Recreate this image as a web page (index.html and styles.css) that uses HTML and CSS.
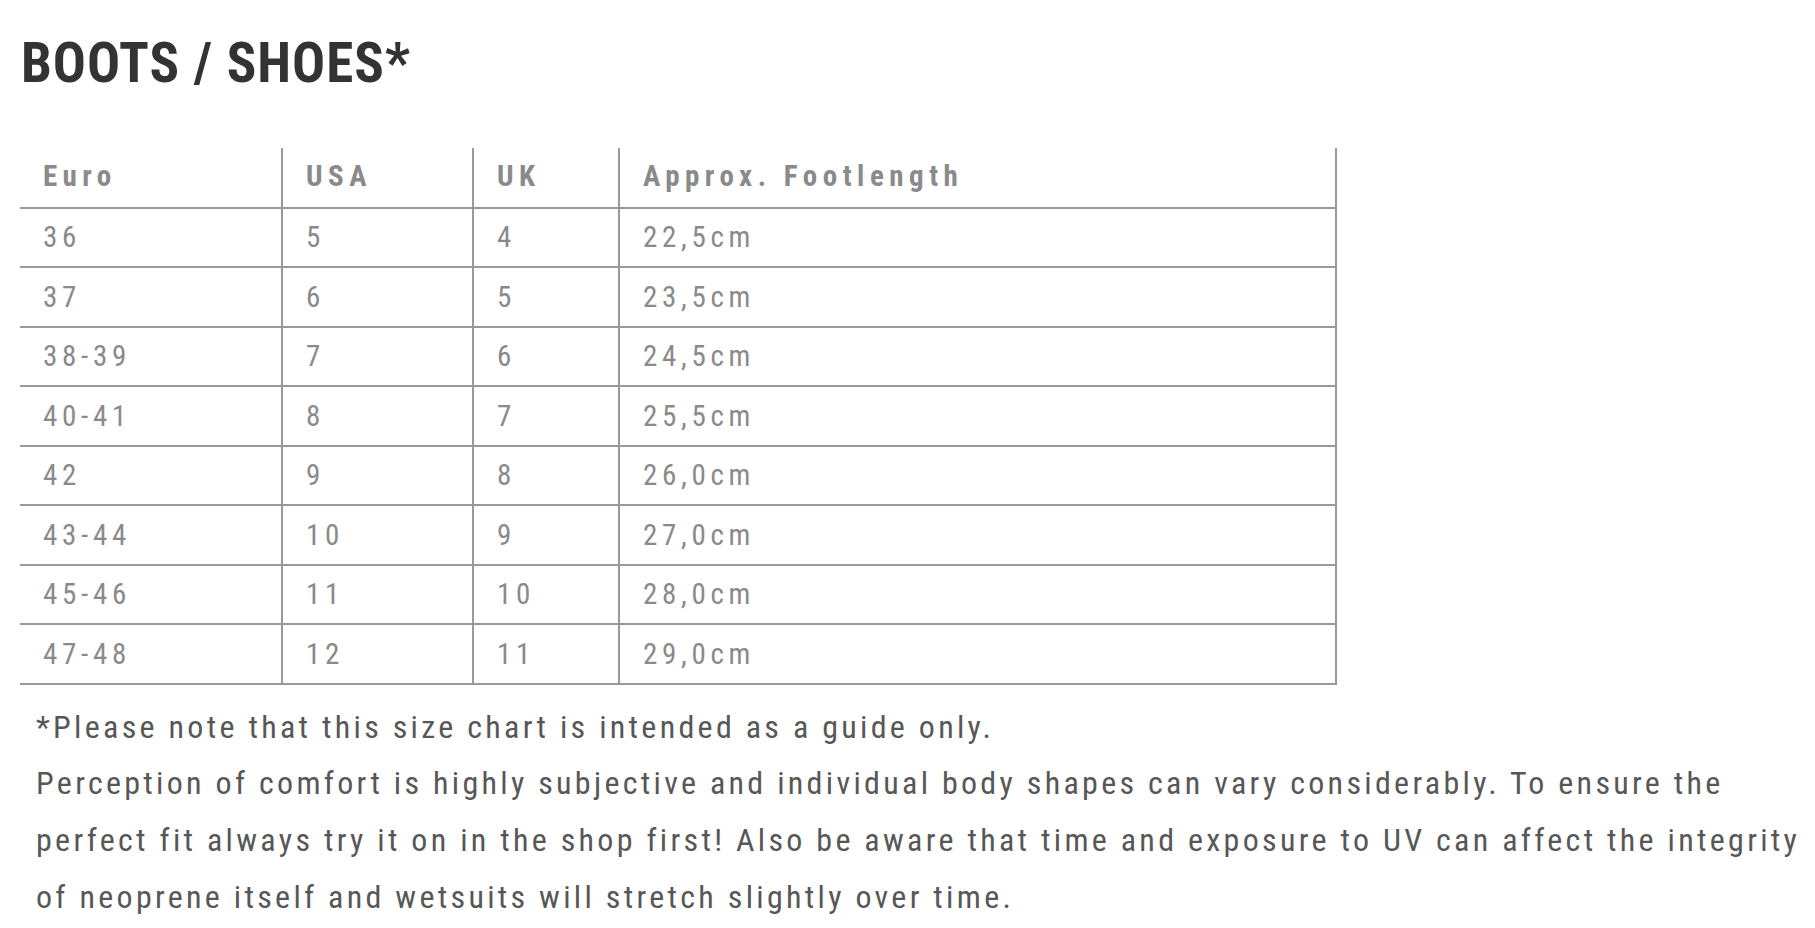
FILE: index.html
```html
<!DOCTYPE html>
<html lang="en">
<head>
<meta charset="utf-8">
<title>Boots / Shoes size chart</title>
<link rel="stylesheet" href="styles.css">
</head>
<body>
<main class="page">
  <h1 class="title">BOOTS / SHOES*</h1>
  <table class="chart">
    <thead>
      <tr><th class="c1">Euro</th><th class="c2">USA</th><th class="c3">UK</th><th class="c4">Approx. Footlength</th></tr>
    </thead>
    <tbody>
      <tr><td>36</td><td>5</td><td>4</td><td>22,5cm</td></tr>
      <tr><td>37</td><td>6</td><td>5</td><td>23,5cm</td></tr>
      <tr><td>38-39</td><td>7</td><td>6</td><td>24,5cm</td></tr>
      <tr><td>40-41</td><td>8</td><td>7</td><td>25,5cm</td></tr>
      <tr><td>42</td><td>9</td><td>8</td><td>26,0cm</td></tr>
      <tr><td>43-44</td><td>10</td><td>9</td><td>27,0cm</td></tr>
      <tr><td>45-46</td><td>11</td><td>10</td><td>28,0cm</td></tr>
      <tr><td>47-48</td><td>12</td><td>11</td><td>29,0cm</td></tr>
    </tbody>
  </table>
  <div class="notes">
    <p>*Please note that this size chart is intended as a guide only.</p>
    <p>Perception of comfort is highly subjective and individual body shapes can vary considerably. To ensure the<br>perfect fit always try it on in the shop first! Also be aware that time and exposure to UV can affect the integrity<br>of neoprene itself and wetsuits will stretch slightly over time.</p>
  </div>
</main>
</body>
</html>
```
FILE: styles.css
```css
html, body {
  margin: 0;
  padding: 0;
  background: #ffffff;
}

.page {
  display: flex;
  flex-direction: column;
  align-items: flex-start;
  padding: 33px 0 0 20px;
  font-family: "Liberation Sans Narrow", "Roboto Condensed", "DejaVu Sans Condensed", "Liberation Sans", sans-serif;
}

.title {
  margin: 0 0 55px 1px;
  font-size: 55px;
  line-height: 60px;
  font-weight: 700;
  letter-spacing: 1px;
  color: #333333;
}

.chart {
  border-collapse: collapse;
  width: 1317px;
  table-layout: fixed;
}

.chart th,
.chart td {
  height: 59.5px;
  padding: 0 0 0 23px;
  text-align: left;
  vertical-align: middle;
  border-bottom: 2px solid #999999;
  border-right: 2px solid #999999;
  color: #8a8a8a;
  box-sizing: border-box;
}

.chart th {
  font-size: 29px;
  font-weight: 700;
  letter-spacing: 5.5px;
  padding-bottom: 3px;
}

.chart td {
  font-size: 29px;
  font-weight: 400;
  letter-spacing: 4.7px;
}

.c1 { width: 262px; }
.c2 { width: 191px; }
.c3 { width: 146px; }
.c4 { width: auto; }

.notes {
  margin: 14px 0 0 16px;
  color: #575757;
  font-size: 32px;
  line-height: 56.7px;
  letter-spacing: 3.3px;
}

.notes p {
  margin: 0;
  white-space: nowrap;
}
```
